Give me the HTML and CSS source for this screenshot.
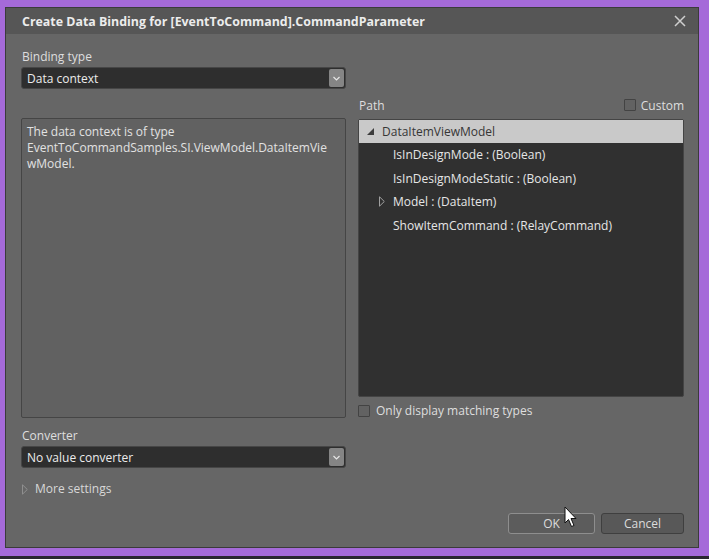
FILE: index.html
```html
<!DOCTYPE html>
<html>
<head>
<meta charset="utf-8">
<link rel="stylesheet" href="styles.css">
</head>
<body>
<div class="dialog">
  <div class="titlebar">
    <span class="title">Create Data Binding for [EventToCommand].CommandParameter</span>
    <svg class="close" width="12" height="12" viewBox="0 0 12 12"><path d="M1 1L11 11M11 1L1 11" stroke="#cfcfcf" stroke-width="1.5"/></svg>
  </div>
  <div class="main">
    <div class="col-left">
      <div class="label">Binding type</div>
      <div class="combo"><span>Data context</span><span class="combo-btn"><svg width="7" height="5" viewBox="0 0 7 5"><path d="M0.5 1L3.5 4L6.5 1" stroke="#e6e6e6" stroke-width="1.2" fill="none"/></svg></span></div>
      <div class="desc">The data context is of type<br>EventToCommandSamples.SI.ViewModel.DataItemVie<br>wModel.</div>
      <div class="label conv-label">Converter</div>
      <div class="combo"><span>No value converter</span><span class="combo-btn"><svg width="7" height="5" viewBox="0 0 7 5"><path d="M0.5 1L3.5 4L6.5 1" stroke="#e6e6e6" stroke-width="1.2" fill="none"/></svg></span></div>
      <div class="more"><svg width="6" height="11" viewBox="0 0 6 11"><path d="M0.5 0.8L5.3 5.5L0.5 10.2Z" stroke="#8f8f8f" fill="none"/></svg><span>More settings</span></div>
    </div>
    <div class="col-right">
      <div class="path-head"><span class="label">Path</span><span class="check-wrap"><span class="check"></span><span>Custom</span></span></div>
      <div class="tree">
        <div class="row sel"><svg class="exp" width="7" height="7" viewBox="0 0 7 7"><path d="M7 0L7 7L0 7Z" fill="#3c3c3c"/></svg><span>DataItemViewModel</span></div>
        <div class="row child">IsInDesignMode : (Boolean)</div>
        <div class="row child">IsInDesignModeStatic : (Boolean)</div>
        <div class="row child has"><svg class="col" width="6" height="11" viewBox="0 0 6 11"><path d="M0.5 0.8L5.3 5.5L0.5 10.2Z" stroke="#a0a0a0" fill="none"/></svg>Model : (DataItem)</div>
        <div class="row child">ShowItemCommand : (RelayCommand)</div>
      </div>
      <div class="match"><span class="check"></span><span>Only display matching types</span></div>
    </div>
  </div>
  <div class="footer">
    <div class="btn ok">OK</div>
    <div class="btn">Cancel</div>
    <svg class="cursor" width="14" height="22" viewBox="0 0 14 22"><path d="M1 1L1 17L4.5 13.5L7.5 20.5L10 19.5L7 12.5L12 12.5Z" fill="#fff" stroke="#111" stroke-width="1"/></svg>
  </div>
</div>
</body>
</html>
```
FILE: styles.css
```css
html { background: #2a2630; }
body {
  margin: 0;
  width: 709px;
  height: 556px;
  box-sizing: border-box;
  padding: 7px 10px 0 5px;
  background: #a56ad9;
  font-family: "Open Sans", "Noto Sans", sans-serif;
  font-size: 12px;
  color: #e0e0e0;
}
.dialog {
  width: 694px;
  height: 541px;
  box-sizing: border-box;
  border: 1px solid #3b3b3b;
  background: #666666;
  display: flex;
  flex-direction: column;
  position: relative;
}
.titlebar {
  height: 26px;
  background: #565656;
  display: flex;
  align-items: center;
  padding: 0 16px;
  justify-content: space-between;
}
.title {
  font-weight: bold;
  font-size: 12.4px;
  color: #ececec;
}
.close { margin-right: -4px; }
.main {
  display: flex;
  padding: 0 14px 0 15px;
  gap: 12px;
}
.col-left {
  width: 325px;
  display: flex;
  flex-direction: column;
  padding-top: 16px;
}
.label {
  line-height: 14px;
  color: #dedede;
  padding-left: 1px;
}
.combo {
  margin-top: 3px;
  height: 22px;
  box-sizing: border-box;
  background: #2e2e2e;
  border: 1px solid #464646;
  border-radius: 3px;
  display: flex;
  align-items: center;
  justify-content: space-between;
  padding: 0 1px 0 5px;
  color: #ececec;
}
.combo-btn {
  width: 15px;
  height: 18px;
  background: #858585;
  border-radius: 2px;
  display: flex;
  align-items: center;
  justify-content: center;
}
.desc {
  margin-top: 29px;
  height: 300px;
  box-sizing: border-box;
  border: 1px solid #454545;
  border-radius: 2px;
  background: #616161;
  padding: 5px 5px;
  line-height: 16px;
  font-size: 12px;
  color: #e2e2e2;
}
.conv-label { margin-top: 11px; }
.more {
  margin-top: 14px;
  display: flex;
  align-items: center;
  gap: 7px;
  padding-left: 1px;
  line-height: 14px;
  color: #d8d8d8;
}
.col-right {
  width: 326px;
  display: flex;
  flex-direction: column;
  padding-top: 64px;
}
.path-head {
  display: flex;
  justify-content: space-between;
  align-items: center;
  height: 14px;
}
.path-head .label { padding-top: 1px; }
.check-wrap {
  display: flex;
  align-items: center;
  gap: 5px;
  color: #dedede;
}
.check {
  width: 12px;
  height: 12px;
  box-sizing: border-box;
  border: 1px solid #434343;
  border-radius: 1px;
  background: #626262;
  display: inline-block;
}
.tree {
  margin-top: 7px;
  height: 278px;
  background: #303030;
  border-radius: 2px;
  border: 1px solid #444;
  box-sizing: border-box;
  color: #e6e6e6;
}
.row {
  height: 23.5px;
  display: flex;
  align-items: center;
}
.row.sel {
  height: 23px;
  background: #c9c9c9;
  color: #363636;
  padding-left: 8px;
  gap: 8px;
}
.row.child { padding-left: 34px; }
.row.has { padding-left: 20px; gap: 8px; }
.match {
  margin-top: 7px;
  display: flex;
  align-items: center;
  gap: 6px;
  color: #dedede;
  line-height: 14px;
}
.footer {
  margin-top: auto;
  display: flex;
  justify-content: flex-end;
  gap: 6px;
  padding: 0 14px 13px 0;
  position: relative;
}
.btn {
  width: 83px;
  height: 21px;
  box-sizing: border-box;
  border: 1px solid #3f3f3f;
  border-radius: 3px;
  background: #585858;
  display: flex;
  align-items: center;
  justify-content: center;
  color: #dcdcdc;
}
.btn.ok {
  width: 87px;
  border-color: #8e8e8e;
  background: #5c5c5c;
}
.cursor {
  position: absolute;
  left: 558px;
  top: -7px;
}
```
